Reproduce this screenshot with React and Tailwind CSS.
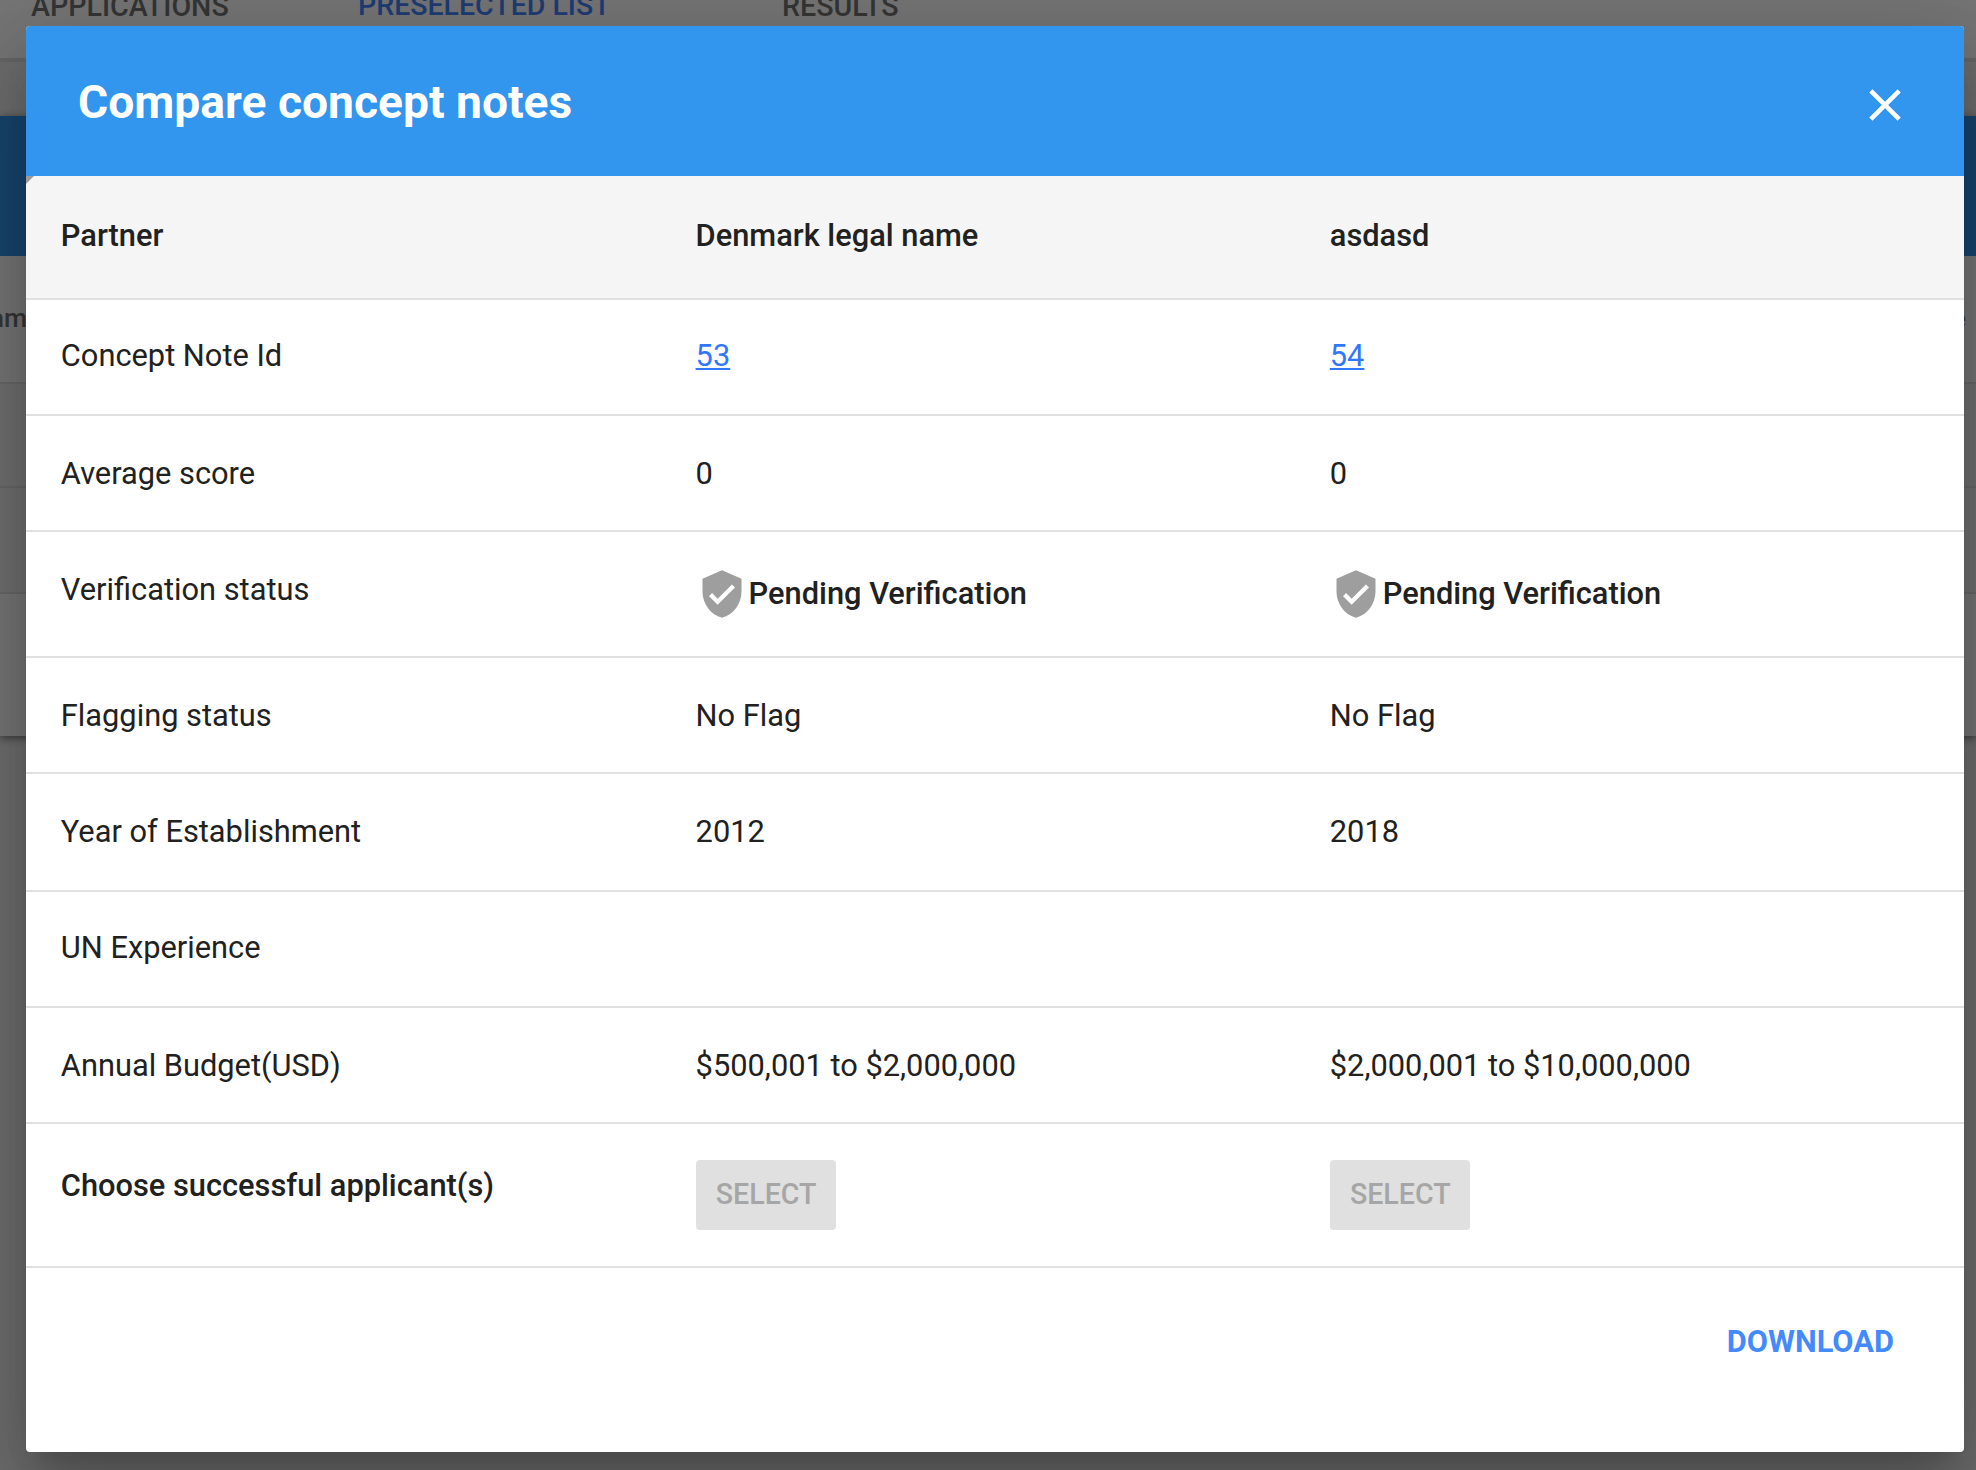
import { MdClose, MdVerifiedUser } from "react-icons/md";

const rows = [
  { label: "Concept Note Id", values: ["53", "54"], kind: "link", box: "h-[116px] pt-[36px]" },
  { label: "Average score", values: ["0", "0"], box: "h-[116px] pt-[38px]" },
  { label: "Verification status", values: ["Pending Verification", "Pending Verification"], kind: "status", box: "h-[126px] pt-[38px]" },
  { label: "Flagging status", values: ["No Flag", "No Flag"], box: "h-[116px] pt-[38px]" },
  { label: "Year of Establishment", values: ["2012", "2018"], box: "h-[118px] pt-[38px]" },
  { label: "UN Experience", values: ["", ""], box: "h-[116px] pt-[36px]" },
  { label: "Annual Budget(USD)", values: ["$500,001 to $2,000,000", "$2,000,001 to $10,000,000"], box: "h-[116px] pt-[38px]" },
];

function Row({ className = "", children }) {
  return (
    <div className={`grid grid-cols-[634.8px_634.2px_1fr] items-start border-b-2 border-[#e0e0e0] pl-[34.8px] ${className}`}>
      {children}
    </div>
  );
}

function Cell({ kind, value }) {
  if (kind === "link") {
    return (
      <div>
        <a className="text-[#3177fb] underline decoration-2 underline-offset-2">{value}</a>
      </div>
    );
  }
  if (kind === "status") {
    return (
      <div className="-mt-[2px] flex items-start font-medium">
        <MdVerifiedUser size={52} className="mr-px shrink-0 text-[#9e9e9e]" />
        <span className="mt-[6px]">{value}</span>
      </div>
    );
  }
  return <div>{value}</div>;
}

function SelectButton() {
  return (
    <button className="mt-[36px] block h-[70px] w-[140px] rounded bg-[#e0e0e0] pb-[3px] pl-px text-[28.6px] font-medium text-[#a6a6a6]">
      SELECT
    </button>
  );
}

function Backdrop() {
  return (
    <div className="h-full w-full bg-[#eeeeee] font-medium">
      <div className="flex h-[58px] items-start overflow-hidden bg-white text-[28.6px] leading-[34px] text-[#757575]">
        <span className="-mt-[11px] ml-[31px] w-[327px]">APPLICATIONS</span>
        <span className="-mt-[11px] w-[424px] text-[28.5px] text-[#4483fb]">PRESELECTED LIST</span>
        <span className="-mt-[11px]">RESULTS</span>
      </div>
      <div className="h-1 bg-[#dcdcdc]" />
      <div className="h-[54px]" />
      <div className="h-[620px] bg-white shadow-[0_2px_8px_rgba(0,0,0,0.5)]">
        <div className="h-[140px] bg-[#3295ee]" />
        <div className="flex h-[128px] items-center justify-between overflow-hidden border-b-2 border-[#e0e0e0] pr-[10px] pb-[3px] text-[26.4px] text-[#757575]">
          <span className="-ml-[29px]">Name</span>
          <span>e</span>
        </div>
        <div className="h-[104px] border-b-2 border-[#e0e0e0] bg-[#f2f2f2]" />
        <div className="h-[106px] border-b-2 border-[#e0e0e0] bg-[#f2f2f2]" />
      </div>
    </div>
  );
}

export default function App() {
  return (
    <div className="relative h-[1470px] w-[1976px] overflow-hidden font-[Roboto,sans-serif] text-[30.8px] leading-[40px] text-[#212121]">
      <Backdrop />
      <div className="absolute inset-0 bg-black/54 pt-[26px] pl-[26px]">
        <div className="flex h-[1426px] w-[1938px] flex-col overflow-hidden rounded bg-white shadow-[0_22px_30px_-14px_rgba(0,0,0,0.2),0_48px_76px_6px_rgba(0,0,0,0.14),0_18px_92px_16px_rgba(0,0,0,0.12)]">
          <header className="flex h-[150px] shrink-0 items-start justify-between bg-[#3295ee] pr-[52px] pl-[52px] text-white">
            <h1 className="mt-[46px] text-[46.2px] leading-[60px] font-bold">Compare concept notes</h1>
            <MdClose size={54} className="mt-[52px]" />
          </header>
          <div className="relative">
            <div className="absolute top-0 left-0 size-2 bg-[#9b9b9b] [clip-path:polygon(0_0,100%_0,0_100%)]" />
            <Row className="h-[124px] bg-[#f5f5f5] pt-[40px] font-medium">
              <div>Partner</div>
              <div>Denmark legal name</div>
              <div>asdasd</div>
            </Row>
          </div>
          {rows.map((r) => (
            <Row key={r.label} className={r.box}>
              <div>{r.label}</div>
              {r.values.map((v, i) => (
                <Cell key={i} kind={r.kind} value={v} />
              ))}
            </Row>
          ))}
          <Row className="h-[144px]">
            <div className="pt-[42px] font-medium">Choose successful applicant(s)</div>
            <SelectButton />
            <SelectButton />
          </Row>
          <footer className="flex justify-end pt-[54px] pr-[70px]">
            <button className="text-[30.8px] leading-[40px] font-bold text-[#448aff]">DOWNLOAD</button>
          </footer>
        </div>
      </div>
    </div>
  );
}
